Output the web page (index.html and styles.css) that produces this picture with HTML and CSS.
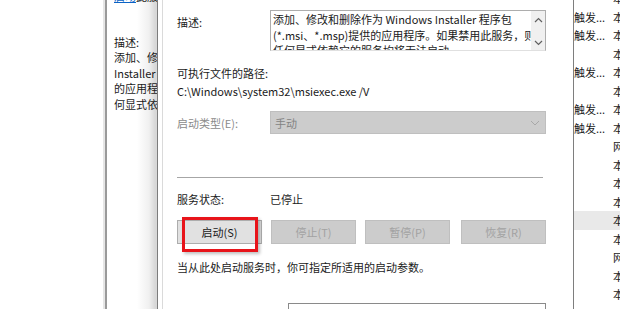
FILE: index.html
```html
<!doctype html>
<html>
  <head>
    <meta charset="utf-8" />
    <title>Windows Installer 属性</title>
    <link rel="stylesheet" href="styles.css">
  </head>
  <body>
    <div class="blank"></div>
    <div class="side-panel">
      <p class="action"><a href="#start">启动</a>此服务</p>
      <p class="side-label">描述:</p>
      <p>添加、修改和删除作为 Windows</p>
      <p>Installer 程序包(*.msi、*.msp)提供</p>
      <p>的应用程序。如果禁用此服务，则任</p>
      <p>何显式依赖它的服务均将无法启动。</p>
    </div>
    <div class="dialog">
      <div class="page">
        <div class="field desc-row">
          <span class="label">描述:</span>
          <div class="desc-box">
            <div class="desc-text">添加、修改和删除作为 Windows Installer 程序包<br>(*.msi、*.msp)提供的应用程序。如果禁用此服务，则<br>任何显式依赖它的服务均将无法启动。</div>
            <div class="scrollbar">
              <svg width="9" height="6" viewBox="0 0 9 6"><path d="M1 5 L4.5 1.5 L8 5" fill="none" stroke="#606060" stroke-width="1.2"/></svg>
              <svg width="9" height="6" viewBox="0 0 9 6"><path d="M1 1 L4.5 4.5 L8 1" fill="none" stroke="#606060" stroke-width="1.2"/></svg>
            </div>
          </div>
        </div>
        <p class="path-label">可执行文件的路径:</p>
        <p class="path">C:\Windows\system32\msiexec.exe /V</p>
        <div class="field type-row">
          <span class="label disabled">启动类型(E):</span>
          <div class="combo">
            <span>手动</span>
            <svg width="10" height="6" viewBox="0 0 10 6"><path d="M1 1 L5 5 L9 1" fill="none" stroke="#a8a8a8" stroke-width="1"/></svg>
          </div>
        </div>
        <hr class="separator">
        <div class="field status-row">
          <span class="label">服务状态:</span>
          <span>已停止</span>
        </div>
        <div class="buttons">
          <div class="btn-wrap">
            <button class="btn">启动(S)</button>
            <div class="highlight"></div>
          </div>
          <button class="btn" disabled>停止(T)</button>
          <button class="btn" disabled>暂停(P)</button>
          <button class="btn wide" disabled>恢复(R)</button>
        </div>
        <p class="hint">当从此处启动服务时，你可指定所适用的启动参数。</p>
        <div class="param-row">
          <div class="param-box"></div>
        </div>
      </div>
    </div>
    <div class="list">
      <div class="row"><span class="type"></span><span class="logon">本地系统</span></div>
      <div class="row"><span class="type">触发...</span><span class="logon">本地系统</span></div>
      <div class="row"><span class="type">触发...</span><span class="logon">本地系统</span></div>
      <div class="row"><span class="type"></span><span class="logon">本地系统</span></div>
      <div class="row"><span class="type">触发...</span><span class="logon">本地服务</span></div>
      <div class="row"><span class="type"></span><span class="logon">本地系统</span></div>
      <div class="row"><span class="type">触发...</span><span class="logon">本地服务</span></div>
      <div class="row"><span class="type">触发...</span><span class="logon">本地系统</span></div>
      <div class="row"><span class="type"></span><span class="logon">网络服务</span></div>
      <div class="row"><span class="type"></span><span class="logon">本地系统</span></div>
      <div class="row"><span class="type"></span><span class="logon">本地系统</span></div>
      <div class="row"><span class="type"></span><span class="logon">本地服务</span></div>
      <div class="row selected"><span class="type"></span><span class="logon">本地系统</span></div>
      <div class="row"><span class="type"></span><span class="logon">本地系统</span></div>
      <div class="row"><span class="type"></span><span class="logon">网络服务</span></div>
      <div class="row"><span class="type"></span><span class="logon">本地系统</span></div>
      <div class="row"><span class="type"></span><span class="logon">本地服务</span></div>
    </div>
  </body>
</html>
```

FILE: styles.css
```css
* { margin: 0; padding: 0; box-sizing: border-box; }
html, body { width: 620px; height: 309px; overflow: hidden; }
body {
  display: flex;
  background: #fff;
  color: #1a1a1a;
  font-family: "Noto Sans CJK SC", sans-serif;
  font-size: 11px;
  line-height: 16px;
}

.blank {
  width: 103px;
  flex: none;
}

/* left description pane of the services snap-in */
.side-panel {
  width: 54px;
  flex: none;
  border-left: 2px solid #e6e6e6;
  box-shadow: inset 2px 0 0 #9a9a9a;
  padding-left: 9px;
  overflow: hidden;
  white-space: nowrap;
  background: linear-gradient(to right, #fff 0, #fff 32px, #f0f0f0 44px, #d8d8d8 50px);
}
.side-panel p { line-height: 15.5px; }
.side-panel .action { margin-top: -11px; margin-bottom: 30px; }
.side-panel a { color: #0b63c5; text-decoration: underline; }

/* properties dialog */
.dialog {
  width: 408px;
  flex: none;
  border-left: 1px solid #7c7c7c;
  background: #fff;
  padding-left: 4px;
}
.page {
  height: 100%;
  border-left: 1px solid #dadada;
  padding: 10px 0 0 14px;
}
.field { display: flex; align-items: center; }
.label { width: 93px; flex: none; }
.disabled { color: #8a8a8a; }

.desc-row { align-items: flex-start; }
.desc-row .label { padding-top: 4px; }
.desc-box {
  width: 276px;
  height: 41px;
  border: 1px solid #adadad;
  border-bottom-color: #e0e0e0;
  display: flex;
  overflow: hidden;
}
.desc-text {
  flex: 1;
  padding: 1px 0 0 2px;
  line-height: 15.5px;
  white-space: nowrap;
  overflow: hidden;
}
.scrollbar {
  width: 14px;
  background: #f0f0f0;
  display: flex;
  flex-direction: column;
  justify-content: space-between;
  align-items: center;
  padding: 6px 0 4px;
}

.path-label { margin-top: 14px; }
.path { margin-top: 2px; }

.type-row { margin-top: 12px; }
.combo {
  width: 276px;
  height: 23px;
  background: #cccccc;
  border: 1px solid #bfbfbf;
  color: #838383;
  display: flex;
  align-items: center;
  justify-content: space-between;
  padding: 0 5px 0 4px;
}

.separator {
  border: none;
  border-top: 1px solid #a6a6a6;
  width: 366px;
  margin-top: 43px;
}

.status-row { margin-top: 13px; }

.buttons {
  display: flex;
  gap: 9px;
  margin-top: 13px;
}
.btn-wrap { position: relative; }
.btn {
  display: block;
  width: 85px;
  height: 24px;
  font: inherit;
  color: #1a1a1a;
  background: #e1e1e1;
  border: 1px solid #adadad;
}
.btn:disabled {
  color: #a2a2a2;
  background: #cccccc;
  border-color: #bfbfbf;
}
.btn.wide { margin-left: 2px; }
.highlight {
  position: absolute;
  left: 5px;
  top: -3px;
  width: 76px;
  height: 35px;
  border: 3px solid #e8141a;
  box-shadow: 2px 2px 3px rgba(0, 0, 0, 0.25);
}

.hint { margin-top: 15px; }

.param-row { padding-left: 111px; margin-top: 28px; }
.param-box {
  width: 258px;
  height: 24px;
  border: 1px solid #8a8a8a;
}

/* services list behind the dialog */
.list {
  flex: 1;
  position: relative;
  border-left: 8px solid transparent;
  overflow: hidden;
}
.list::before {
  content: "";
  position: absolute;
  left: -8px;
  top: 0;
  width: 8px;
  height: 100%;
  background: linear-gradient(to right, #f3f3f3, #e3e3e3);
  border-right: 1px solid #7e7e7e;
}
.row {
  display: flex;
  height: 18.5px;
  line-height: 18.5px;
  white-space: nowrap;
  padding-left: 1px;
}
.row:first-child { margin-top: -11px; }
.row.selected { background: #e9e9e9; }
.type { width: 39px; flex: none; overflow: hidden; }
.logon { flex: none; }
```
